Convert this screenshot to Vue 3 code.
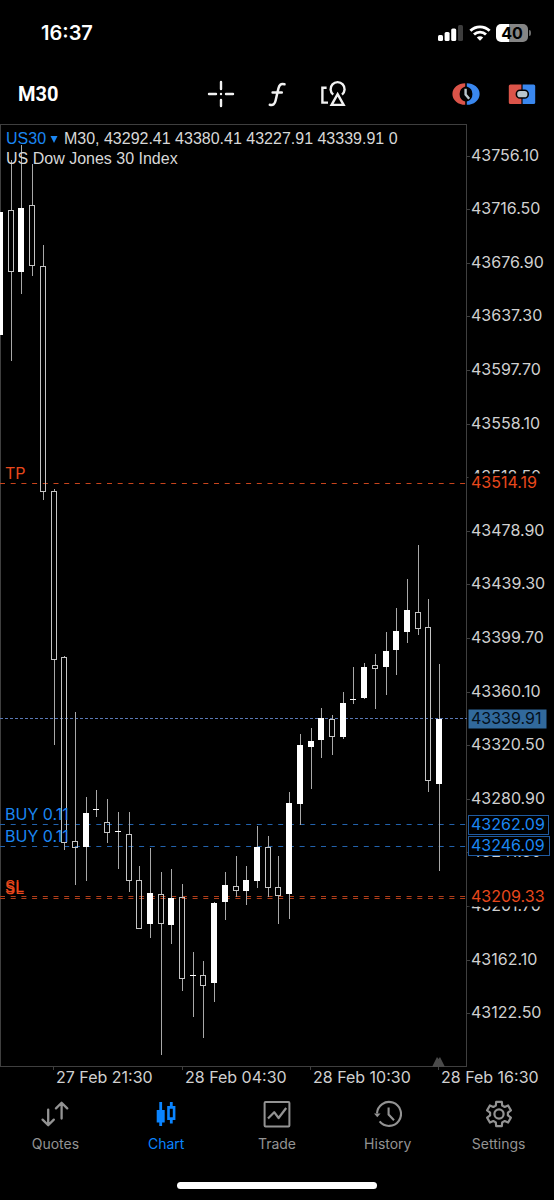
<template>
  <div class="screen">
    <header class="status">
      <time class="clock">16:37</time>
      <div class="status-icons">
        <svg width="26" height="18" viewBox="0 0 26 18" aria-hidden="true">
          <rect x="0" y="11" width="5" height="6" rx="1.5" fill="#fff" />
          <rect x="6.6" y="8" width="5" height="9" rx="1.5" fill="#fff" />
          <rect x="13.2" y="4.5" width="5" height="12.5" rx="1.5" fill="#fff" />
          <rect x="20" y="1" width="5" height="16" rx="1.5" fill="#3d3d3d" />
        </svg>
        <svg width="22" height="18" viewBox="0 0 22 18" fill="none" stroke="#fff" aria-hidden="true">
          <path d="M1.4 6.8 A13.6 13.6 0 0 1 20.6 6.8" stroke-width="2.9" />
          <path d="M5 10.6 A8.5 8.5 0 0 1 17 10.6" stroke-width="2.8" />
          <path d="M11 16.8 L7.8 13.5 A4.6 4.6 0 0 1 14.2 13.5 Z" fill="#fff" stroke="none" />
        </svg>
        <div class="battery">
          <span class="battery-level">40</span>
          <i class="battery-nub"></i>
        </div>
      </div>
    </header>

    <div class="toolbar">
      <button class="timeframe">M30</button>
      <div class="tools">
        <button class="tool" aria-label="Crosshair">
          <svg viewBox="0 0 28 28" fill="none" stroke="#f2f2f2" stroke-width="2.4" stroke-linecap="round">
            <path d="M14 2 V9 M14 20 V26 M2 14 H9 M19 14 H26 M14 14 h.01" />
          </svg>
        </button>
        <button class="tool" aria-label="Indicators">
          <svg viewBox="0 0 28 28" fill="none" stroke="#f2f2f2" stroke-width="2.5" stroke-linecap="round" stroke-linejoin="round">
            <path d="M21.5 4.3 C17.6 3.2 16.2 5 15.4 8.5 L12.6 20.5 C11.8 24 10.2 25.8 6.8 24.8 M9.6 12.6 H18.8" />
          </svg>
        </button>
        <button class="tool" aria-label="Objects">
          <svg viewBox="0 0 28 28" fill="none" stroke="#f2f2f2" stroke-width="2.4">
            <path d="M7.6 7.7 H3.4 V22.6 H9" />
            <path d="M14.2 14.6 A7 7 0 1 1 23 14.6" />
            <path d="M18.6 14.2 L24.6 24.9 H12.6 Z" />
          </svg>
        </button>
      </div>
      <div class="tools tools-end">
        <button class="tool" aria-label="Pending order">
          <svg viewBox="0 0 28 28" fill="none">
            <path d="M13.2 3.2 A12.8 10.8 0 0 0 13.2 24.8 V21.6 A8.2 8 0 0 1 13.2 6.4 Z" fill="#db5449" />
            <path d="M14.8 3.2 A12.8 10.8 0 0 1 14.8 24.8 V21.6 A8.2 8 0 0 0 14.8 6.4 Z" fill="#3a87ee" />
            <path d="M13.6 8.8 V14.6 L17.2 18.8" stroke="#b9c6cc" stroke-width="2.4" />
          </svg>
        </button>
        <button class="tool" aria-label="One-click trading">
          <svg viewBox="0 0 28 28">
            <path d="M2.4 4.4 H13.4 V24 H2.4 A1.6 1.6 0 0 1 .8 22.4 V6 A1.6 1.6 0 0 1 2.4 4.4 Z" fill="#db5449" />
            <path d="M14.6 4.4 H25.6 A1.6 1.6 0 0 1 27.2 6 V22.4 A1.6 1.6 0 0 1 25.6 24 H14.6 Z" fill="#3a87ee" />
            <rect x="8.4" y="10.2" width="11.8" height="7.8" rx="3.6" fill="#b9c6cc" stroke="#000" stroke-width="1.6" />
          </svg>
        </button>
      </div>
    </div>

    <main class="chart">
      <div class="legend">
        <div>
          <button class="symbol">US30 <svg class="caret" viewBox="0 0 8 8" aria-hidden="true"><path d="M0 0 H7 L3.5 7 Z" fill="#1b87f3" /></svg></button>
          M30, 43292.41 43380.41 43227.91 43339.91 0
        </div>
        <div>US Dow Jones 30 Index</div>
      </div>

      <svg class="plot" viewBox="0 124 554 966" role="img" aria-label="US30 M30 candlestick chart">
        <g fill="none" stroke="#3f3f3f" shape-rendering="crispEdges">
          <rect x="0.5" y="124.5" width="466" height="942" />
          <path v-for="p in prices" :key="p" :d="`M467 ${Math.round(priceY(p))}.5 h3`" />
          <path v-for="t in times" :key="t.label" :d="`M${t.x}.5 1067 v3`" />
        </g>
        <path d="M432 1067 L437 1057 L438.5 1059 L440 1057 L445 1067 Z" fill="#4a4a4a" />

        <g fill="none" stroke-width="1">
          <path
            v-for="l in levels"
            :key="l.y"
            :d="`M0 ${l.y}.5 H467`"
            :stroke="l.stroke"
            :stroke-dasharray="l.dash"
          />
        </g>

        <g shape-rendering="crispEdges">
          <template v-for="(c, i) in candles" :key="i">
            <rect v-if="c[1] > c[0]" :x="candleX(i)" :y="c[0]" width="1" :height="c[1] - c[0]" fill="#a8a8a8" />
            <rect v-if="c[3] > c[2]" :x="candleX(i)" :y="c[2]" width="1" :height="c[3] - c[2]" fill="#a8a8a8" />
            <rect v-if="c[4]" :x="candleX(i) - 3" :y="c[1]" width="6" :height="c[2] - c[1]" fill="#fff" />
            <rect
              v-else
              :x="candleX(i) - 2.5"
              :y="c[1] + 0.5"
              width="5"
              :height="c[2] - c[1] - 1"
              fill="none"
              stroke="#c4c4c4"
            />
          </template>
        </g>

        <g class="axis">
          <text v-for="l in levels.filter(l => l.label)" :key="l.y" x="5" :y="l.textY" :fill="l.color">{{ l.label }}</text>
          <text v-for="t in times" :key="t.label" :x="t.x + 3" y="1083">{{ t.label }}</text>
          <text v-for="p in prices" :key="p" x="471" :y="Math.round(priceY(p)) + 5">{{ p.toFixed(2) }}</text>
        </g>

        <g v-for="tag in tags" :key="tag.price" class="axis">
          <rect x="468.5" :y="tag.y - 9.5" :width="tag.width" height="19" :fill="tag.fill" :stroke="tag.stroke" />
          <text x="471" :y="tag.y + 5" :fill="tag.color">{{ tag.price }}</text>
        </g>
      </svg>
    </main>

    <nav class="tabs">
      <a href="#quotes" class="tab">
        <svg viewBox="0 0 28 28" fill="none" stroke="currentColor" stroke-width="2.3" stroke-linecap="round" stroke-linejoin="round">
          <path d="M7.2 9.6 V25 M1.6 19.6 L7.2 25.2 L12.8 19.6 M20.6 18.6 V3 M15 8.4 L20.6 2.8 L26.2 8.4" />
        </svg>
        Quotes
      </a>
      <a href="#chart" class="tab active" aria-current="page">
        <svg viewBox="0 0 28 28" fill="currentColor">
          <path d="M7.3 2 H10.1 V10 H12.7 V22.4 H10.1 V26 H7.3 V22.4 H4.7 V10 H7.3 Z" />
          <path fill-rule="evenodd" d="M17.9 2 H20.7 V6 H23.4 V20 H20.7 V23.6 H17.9 V20 H15.2 V6 H17.9 Z M17.8 8.8 V17.2 H20.8 V8.8 Z" />
        </svg>
        Chart
      </a>
      <a href="#trade" class="tab">
        <svg viewBox="0 0 28 28" fill="none" stroke="currentColor" stroke-width="2" stroke-linejoin="round">
          <rect x="1.6" y="2" width="24.8" height="24.4" rx="1" />
          <path d="M5 18.6 L11.2 12.2 L15.6 18 L23.2 8" stroke-width="2.2" />
        </svg>
        Trade
      </a>
      <a href="#history" class="tab">
        <svg viewBox="0 0 28 28" fill="none" stroke="currentColor" stroke-width="2.1">
          <path d="M3 13.4 A12 12 0 1 1 5.6 21.4" />
          <path d="M0 13.4 H6.6 L3.3 17.2 Z" fill="currentColor" stroke="none" />
          <path d="M14.6 7.6 V14.6 L20 20.2" />
        </svg>
        History
      </a>
      <a href="#settings" class="tab">
        <svg viewBox="0 0 28 28" fill="none" stroke="currentColor" stroke-width="2.2" stroke-linejoin="round">
          <path :d="gear" />
          <circle cx="14" cy="14" r="4.6" />
        </svg>
        Settings
      </a>
    </nav>
    <div class="home"></div>
  </div>
</template>

<script setup>
const TOP_PRICE = 43756.1
const STEP = 39.6

const prices = Array.from({ length: 17 }, (_, i) => TOP_PRICE - STEP * i)
const priceY = (p) => 155.6 + (TOP_PRICE - p) * 1.3535

const times = [
  { x: 53, label: '27 Feb 21:30' },
  { x: 182, label: '28 Feb 04:30' },
  { x: 310, label: '28 Feb 10:30' },
  { x: 438, label: '28 Feb 16:30' },
]

const levels = [
  { y: 483, label: 'TP', textY: 479, color: '#e8481c', stroke: '#c8441c', dash: '5 5.7' },
  { y: 718, stroke: '#5a78b4', dash: '3 2' },
  { y: 824, label: 'BUY 0.11', textY: 820, color: '#1b87f3', stroke: '#2262ac', dash: '5 5.7' },
  { y: 846, label: 'BUY 0.11', textY: 842, color: '#1b87f3', stroke: '#2262ac', dash: '5 5.7' },
  { y: 896, label: 'SL', textY: 892, color: '#e8481c', stroke: '#b03e1a', dash: '5 5.7' },
  { y: 898, label: 'SL', textY: 894, color: '#e8481c', stroke: '#b03e1a', dash: '5 5.7' },
]

const tags = [
  { y: 483, price: '43514.19', width: 78, fill: '#000', stroke: 'none', color: '#e8481c' },
  { y: 719, price: '43339.91', width: 78, fill: '#31699c', stroke: 'none', color: '#04101c' },
  { y: 825, price: '43262.09', width: 80, fill: '#000', stroke: '#1f5aa0', color: '#1b87f3' },
  { y: 846, price: '43246.09', width: 81, fill: '#000', stroke: '#1f5aa0', color: '#1b87f3' },
  { y: 897, price: '43209.33', width: 78, fill: '#000', stroke: 'none', color: '#e8481c' },
]

// wick top, body top, body bottom, wick bottom, filled
const candles = [
  [212, 212, 335, 335, 1],
  [160, 210, 272, 361, 0],
  [145, 208, 272, 294, 1],
  [164, 205, 266, 276, 0],
  [245, 266, 492, 500, 0],
  [489, 491, 660, 745, 0],
  [656, 657, 843, 850, 0],
  [712, 841, 848, 885, 0],
  [797, 813, 847, 881, 1],
  [790, 809, 810, 817, 1],
  [799, 822, 833, 843, 0],
  [812, 831, 832, 869, 1],
  [812, 834, 881, 892, 0],
  [866, 880, 929, 929, 0],
  [848, 893, 924, 938, 1],
  [872, 894, 924, 1055, 0],
  [869, 898, 925, 944, 1],
  [884, 897, 979, 991, 0],
  [952, 975, 976, 1017, 1],
  [961, 975, 986, 1038, 0],
  [902, 903, 983, 1002, 1],
  [872, 885, 902, 920, 1],
  [856, 886, 891, 897, 0],
  [866, 880, 891, 905, 1],
  [826, 847, 881, 888, 1],
  [836, 847, 888, 897, 0],
  [856, 887, 896, 924, 0],
  [792, 803, 894, 919, 1],
  [734, 745, 804, 825, 1],
  [728, 741, 747, 789, 1],
  [708, 718, 740, 758, 1],
  [715, 719, 737, 755, 0],
  [692, 703, 737, 739, 1],
  [667, 699, 700, 704, 1],
  [663, 667, 698, 699, 1],
  [654, 665, 669, 709, 0],
  [632, 651, 667, 695, 1],
  [608, 631, 650, 675, 1],
  [579, 610, 632, 643, 1],
  [545, 612, 629, 635, 0],
  [599, 627, 781, 792, 0],
  [664, 719, 784, 871, 1],
]
const candleX = (i) => Math.round(i * 10.71)

// six teeth, four outline points each
const gear = (() => {
  const pts = []
  for (let i = 0; i < 6; i++) {
    for (const [deg, r] of [[-21, 9], [-13, 12.4], [13, 12.4], [21, 9]]) {
      const a = ((i * 60 + deg - 90) * Math.PI) / 180
      pts.push(`${(14 + r * Math.cos(a)).toFixed(1)} ${(14 + r * Math.sin(a)).toFixed(1)}`)
    }
  }
  return `M${pts.join(' L')} Z`
})()
</script>

<style>
body {
  background: #000;
}
</style>

<style scoped>
.screen {
  min-height: 100vh;
  display: flex;
  flex-direction: column;
  background: #000;
  color: #d8d8d8;
  font-family: Inter, "Liberation Sans", sans-serif;
}

button {
  padding: 0;
  border: 0;
  background: none;
  color: inherit;
  font: inherit;
  cursor: pointer;
}

.status {
  display: flex;
  justify-content: space-between;
  align-items: center;
  height: 66px;
  padding: 0 23px 0 41px;
}

.clock {
  color: #fff;
  font-size: 20px;
  font-weight: 600;
}

.status-icons {
  display: flex;
  align-items: center;
  gap: 5px;
}

.battery {
  display: flex;
  align-items: center;
  gap: 1px;
}

.battery-level {
  width: 32px;
  border-radius: 5px;
  background: linear-gradient(to right, #fff 40%, #858585 40%);
  color: #000;
  font-size: 16px;
  font-weight: 700;
  line-height: 18px;
  text-align: center;
}

.battery-nub {
  width: 2px;
  height: 6px;
  border-radius: 0 2px 2px 0;
  background: #6a6a6a;
}

.toolbar {
  display: grid;
  grid-template-columns: 1fr auto 1fr;
  align-items: center;
  height: 58px;
  padding: 0 18px 2px;
  box-sizing: border-box;
}

.timeframe {
  justify-self: start;
  color: #fff;
  font-family: Roboto, sans-serif;
  font-size: 20px;
  font-weight: 700;
}

.tools {
  display: flex;
  gap: 28px;
}

.tools-end {
  justify-self: end;
}

.tool,
.tool svg {
  display: block;
  width: 28px;
  height: 28px;
}

.chart {
  position: relative;
}

.legend {
  position: absolute;
  top: 5px;
  left: 6px;
  font-family: "Liberation Sans", Arial, sans-serif;
  font-size: 16px;
  line-height: 20px;
}

.symbol {
  color: #1b87f3;
}

.caret {
  width: 9px;
  height: 8px;
}

.plot {
  display: block;
  width: 100%;
}

.axis text {
  font-size: 16px;
}

.axis text:not([fill]) {
  fill: #d0d0d0;
}

.tabs {
  display: grid;
  grid-template-columns: repeat(5, 1fr);
  padding-top: 10px;
}

.tab {
  display: flex;
  flex-direction: column;
  align-items: center;
  gap: 8px;
  color: #939393;
  font-size: 14px;
  line-height: 16px;
  text-decoration: none;
}

.tab svg {
  width: 28px;
  height: 28px;
}

.active {
  color: #0a84ff;
}

.home {
  width: 36%;
  height: 7px;
  margin: 30px auto 11px;
  border-radius: 4px;
  background: #fff;
}
</style>
